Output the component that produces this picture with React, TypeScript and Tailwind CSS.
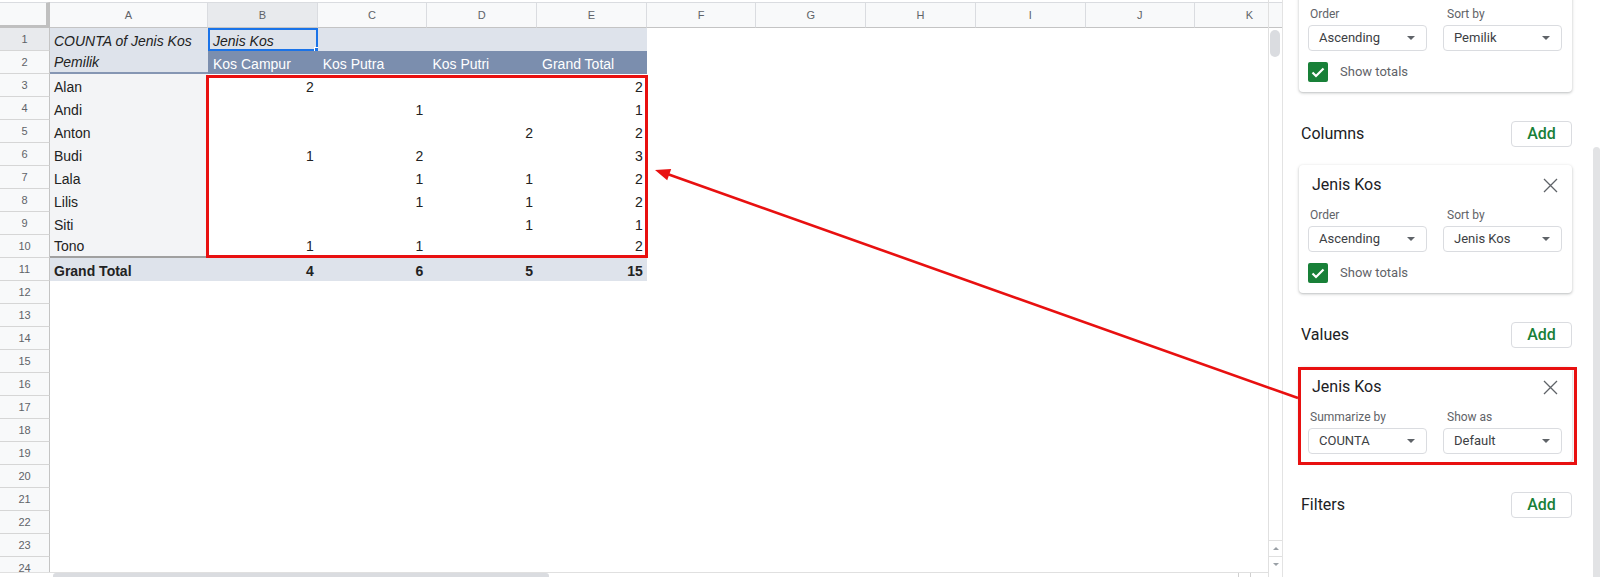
import React from 'react';

const names = ['Alan', 'Andi', 'Anton', 'Budi', 'Lala', 'Lilis', 'Siti', 'Tono'];
const data: string[][] = [
  ['2', '', '', '2'],
  ['', '1', '', '1'],
  ['', '', '2', '2'],
  ['1', '2', '', '3'],
  ['', '1', '1', '2'],
  ['', '1', '1', '2'],
  ['', '', '1', '1'],
  ['1', '1', '', '2'],
];

function RowHead({ n, selected }: { n: number; selected?: boolean }) {
  return (
    <div
      className={
        'w-[50px] shrink-0 h-full flex items-center justify-center border-r border-b border-r-[#c4c4c4] border-b-[#d6d6d6] text-[11px] text-[#5f6368] ' +
        (selected ? 'bg-[#e8eaed]' : 'bg-[#f8f9fa]')
      }
    >
      {n}
    </div>
  );
}

function HeaderRow() {
  const cols = ['B', 'C', 'D', 'E', 'F', 'G', 'H', 'I', 'J', 'K'];
  return (
    <div className="flex h-[28px] shrink-0 pt-[2px] bg-white">
      <div className="w-[50px] shrink-0 h-full bg-[#f8f9fa] border-t border-t-[#dadce0] border-r-[4px] border-r-[#c0c0c0] border-b-[3px] border-b-[#c0c0c0]" />
      <div className="w-[158px] shrink-0 h-full flex items-center justify-center bg-[#f8f9fa] border-t border-r border-b border-t-[#dadce0] border-r-[#dadce0] border-b-[#c4c4c4] text-[11px] text-[#5f6368]">
        A
      </div>
      {cols.map((c) => (
        <div
          key={c}
          className={
            'w-[109.7px] shrink-0 h-full flex items-center justify-center border-t border-r border-b border-t-[#dadce0] border-r-[#dadce0] border-b-[#c4c4c4] text-[11px] text-[#5f6368] ' +
            (c === 'B' ? 'bg-[#e8eaed]' : 'bg-[#f8f9fa]')
          }
        >
          {c}
        </div>
      ))}
    </div>
  );
}

function Row({ children }: { children?: React.ReactNode }) {
  return <div className="flex h-[23px] shrink-0">{children}</div>;
}

const cellBase = 'h-full shrink-0 flex items-end pb-[2px] leading-[16px] text-[14px] text-[#222222] whitespace-nowrap overflow-hidden';

function Grid() {
  const rows: React.ReactNode[] = [];
  // Row 1
  rows.push(
    <Row key={1}>
      <RowHead n={1} selected />
      <div className={cellBase + ' w-[158px] bg-[#dee3eb] pl-[4px] italic'}>COUNTA of Jenis Kos</div>
      <div className={cellBase + ' relative w-[109.7px] bg-[#dee3eb] pl-[5px] italic'}>
        Jenis Kos
        <div className="absolute inset-0 border-2 border-[#1a73e8]" />
        <div className="absolute right-[-3px] bottom-[-3px] h-[7px] w-[7px] bg-[#1a73e8] border border-white" />
      </div>
      <div className={cellBase + ' w-[109.7px] bg-[#dee3eb]'} />
      <div className={cellBase + ' w-[109.7px] bg-[#dee3eb]'} />
      <div className={cellBase + ' w-[109.7px] bg-[#dee3eb]'} />
      <div className="flex-1" />
    </Row>
  );
  // Row 2
  rows.push(
    <Row key={2}>
      <RowHead n={2} />
      <div className={cellBase + ' w-[158px] bg-[#dee3eb] pl-[4px] italic border-b-2 border-b-[#8596b3]'}>Pemilik</div>
      {['Kos Campur', 'Kos Putra', 'Kos Putri', 'Grand Total'].map((t) => (
        <div key={t} className={cellBase + ' w-[109.7px] bg-[#7b8eae] pl-[5px] text-white'}>
          {t}
        </div>
      ))}
      <div className="flex-1" />
    </Row>
  );
  names.forEach((nm, i) => {
    const last = i === names.length - 1;
    rows.push(
      <Row key={3 + i}>
        <RowHead n={3 + i} />
        <div className={cellBase + ' w-[158px] bg-[#f3f4f6] pl-[4px] ' + (last ? 'border-b-2 border-b-[#a0a0a0]' : '')}>{nm}</div>
        {data[i].map((v, j) => (
          <div
            key={j}
            className={cellBase + ' w-[109.7px] bg-white justify-end pr-[4px] ' + (last ? 'border-b-2 border-b-[#a0a0a0]' : '')}
          >
            {v}
          </div>
        ))}
        <div className="flex-1" />
      </Row>
    );
  });
  // Row 11
  rows.push(
    <Row key={11}>
      <RowHead n={11} />
      <div className={cellBase + ' w-[158px] bg-[#dee3eb] pl-[4px] font-bold'}>Grand Total</div>
      {['4', '6', '5', '15'].map((v, j) => (
        <div key={j} className={cellBase + ' w-[109.7px] bg-[#dee3eb] justify-end pr-[4px] font-bold'}>
          {v}
        </div>
      ))}
      <div className="flex-1" />
    </Row>
  );
  for (let n = 12; n <= 24; n++) {
    rows.push(
      <Row key={n}>
        <RowHead n={n} />
        <div className="flex-1" />
      </Row>
    );
  }
  return (
    <div className="flex-1 min-h-0 overflow-hidden flex flex-col">
      <HeaderRow />
      {rows}
    </div>
  );
}

function HScroll() {
  return (
    <div className="h-[5px] shrink-0 flex border-t border-[#e0e0e0] bg-white">
      <div className="ml-[53px] w-[496px] h-full bg-[#dadce0] rounded-t-[3px]" />
      <div className="ml-auto mr-[6px] flex h-full">
        <div className="w-[12px] h-full border-l border-[#d0d0d0]" />
        <div className="w-[12px] h-full border-l border-[#d0d0d0]" />
      </div>
    </div>
  );
}

function VScroll() {
  return (
    <div className="w-[14px] shrink-0 h-full flex flex-col border-l border-[#e0e0e0] bg-white">
      <div className="h-[28px] shrink-0 pt-[2px]">
        <div className="h-full bg-[#f8f9fa] border-t border-b border-t-[#dadce0] border-b-[#c4c4c4]" />
      </div>
      <div className="ml-[1px] mt-[2px] w-[10px] h-[27px] rounded-[5px] bg-[#dadce0]" />
      <div className="mt-auto mb-[5px] flex flex-col">
        <div className="h-[16px] flex items-center justify-center border-t border-[#e0e0e0]">
          <svg width="6" height="3" viewBox="0 0 6 3">
            <path d="M0 3H6L3 0Z" fill="#9aa0a6" />
          </svg>
        </div>
        <div className="h-[16px] flex items-center justify-center border-t border-[#e0e0e0]">
          <svg width="6" height="3" viewBox="0 0 6 3">
            <path d="M0 0H6L3 3Z" fill="#9aa0a6" />
          </svg>
        </div>
      </div>
    </div>
  );
}

function Caret() {
  return (
    <svg width="8" height="4" viewBox="0 0 8 4">
      <path d="M0 0H8L4 4Z" fill="#5f6368" />
    </svg>
  );
}

function Select({ value }: { value: string }) {
  return (
    <div className="h-[26px] w-[119px] shrink-0 flex items-center justify-between pl-[10px] pr-[11px] border border-[#dadce0] rounded-[4px] text-[13px] text-[#3c4043]">
      <span>{value}</span>
      <Caret />
    </div>
  );
}

function XIcon() {
  return (
    <svg width="15" height="15" viewBox="0 0 15 15">
      <path d="M1 1L14 14M14 1L1 14" stroke="#5f6368" strokeWidth="1.3" fill="none" />
    </svg>
  );
}

function Check() {
  return (
    <div className="h-[20px] w-[20px] shrink-0 rounded-[2px] bg-[#188038] flex items-center justify-center">
      <svg width="14" height="11" viewBox="0 0 14 11">
        <path d="M1.5 5.5L5 9L12.5 1.5" stroke="white" strokeWidth="2.2" fill="none" />
      </svg>
    </div>
  );
}

function Card({
  title,
  l1,
  l2,
  v1,
  v2,
  totals,
  className,
}: {
  title: string;
  l1: string;
  l2: string;
  v1: string;
  v2: string;
  totals?: boolean;
  className?: string;
}) {
  return (
    <div
      className={
        'shrink-0 bg-white rounded-[4px] pl-[9px] pr-[10px] pt-[10px] shadow-[0_1px_2px_rgba(60,64,67,0.22),0_1px_3px_1px_rgba(60,64,67,0.1)] ' +
        (className || '')
      }
    >
      <div className="h-[20px] flex items-center justify-between pl-[4px] pr-[4px]">
        <span className="text-[16px] leading-[20px] text-[#202124]">{title}</span>
        <XIcon />
      </div>
      <div className="mt-[12px] h-[16px] flex text-[12px] leading-[16px] text-[#5f6368]">
        <span className="w-[137px] pl-[2px]">{l1}</span>
        <span className="pl-[2px]">{l2}</span>
      </div>
      <div className="mt-[3px] flex justify-between">
        <Select value={v1} />
        <Select value={v2} />
      </div>
      {totals && (
        <div className="mt-[11px] h-[20px] flex items-center">
          <Check />
          <span className="ml-[12px] text-[13px] text-[#5f6368]">Show totals</span>
        </div>
      )}
    </div>
  );
}

function Section({ label, className }: { label: string; className?: string }) {
  return (
    <div className={'h-[26px] shrink-0 flex items-center justify-between ' + (className || '')}>
      <span className="pl-[2px] text-[16px] text-[#202124]">{label}</span>
      <div className="h-[26px] w-[61px] flex items-center justify-center border border-[#dadce0] rounded-[4px] text-[16px] font-medium text-[#188038]">
        Add
      </div>
    </div>
  );
}

function Panel() {
  return (
    <div className="flex-1 h-full flex border-l border-[#e3e3e3] bg-white font-[Roboto,sans-serif] overflow-hidden">
      <div className="flex-1 flex flex-col pl-[16px] pr-[21px] overflow-hidden">
        <Card className="h-[128px] mt-[-36px]" title="Pemilik" l1="Order" l2="Sort by" v1="Ascending" v2="Pemilik" totals />
        <Section label="Columns" className="mt-[29px]" />
        <Card className="h-[128px] mt-[18px]" title="Jenis Kos" l1="Order" l2="Sort by" v1="Ascending" v2="Jenis Kos" totals />
        <Section label="Values" className="mt-[29px]" />
        <Card className="h-[95px] mt-[19px]" title="Jenis Kos" l1="Summarize by" l2="Show as" v1="COUNTA" v2="Default" />
        <Section label="Filters" className="mt-[30px]" />
      </div>
      <div className="w-[7px] shrink-0 flex flex-col">
        <div className="mt-[147px] flex-1 bg-[#e2e3e5] rounded-t-[4px]" />
      </div>
    </div>
  );
}

function Annotations() {
  return (
    <svg className="absolute inset-0 pointer-events-none" width="1600" height="577" viewBox="0 0 1600 577">
      <rect x="207.5" y="76.5" width="439" height="180" fill="none" stroke="#e81010" strokeWidth="3" />
      <rect x="1299.5" y="368.5" width="276" height="95" fill="none" stroke="#e81010" strokeWidth="3" />
      <line x1="1298" y1="398" x2="666" y2="173.5" stroke="#e81010" strokeWidth="2.6" />
      <polygon points="655,170 671.2,169.1 667.2,180.3" fill="#e81010" />
    </svg>
  );
}

export default function App() {
  return (
    <div className="relative flex h-[577px] w-[1600px] overflow-hidden bg-white">
      <div className="flex w-[1268px] shrink-0 flex-col h-full font-['Liberation_Sans',Arial,sans-serif]">
        <Grid />
        <HScroll />
      </div>
      <VScroll />
      <Panel />
      <Annotations />
    </div>
  );
}
